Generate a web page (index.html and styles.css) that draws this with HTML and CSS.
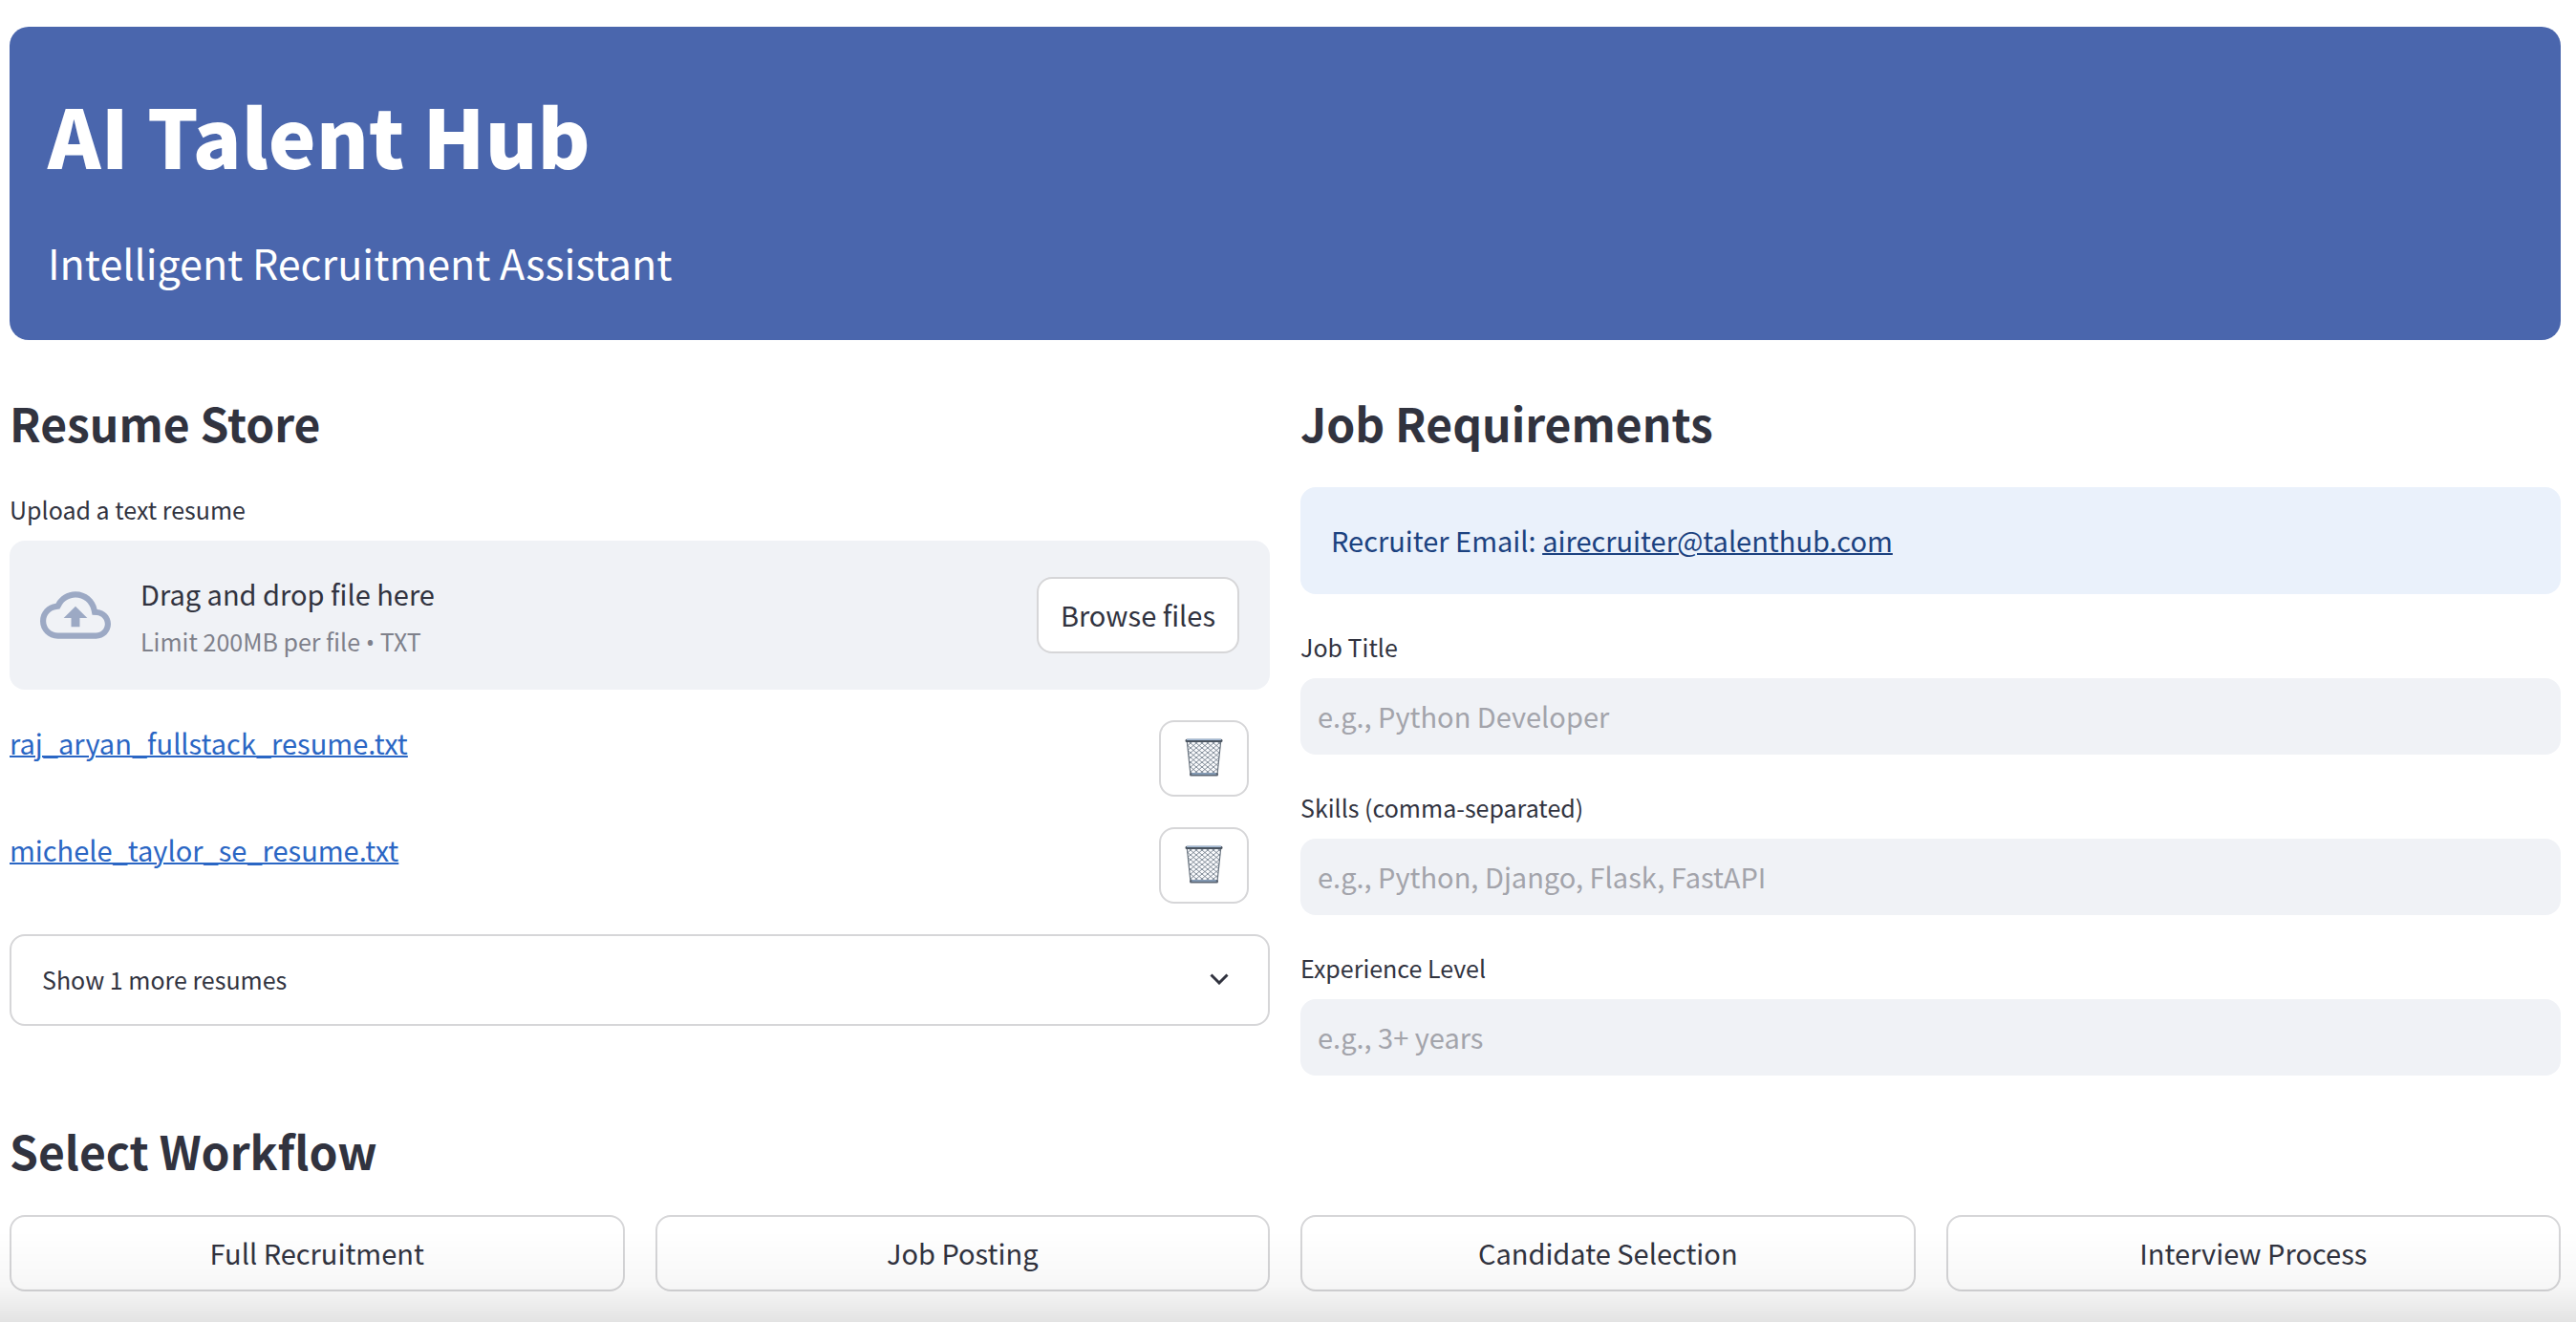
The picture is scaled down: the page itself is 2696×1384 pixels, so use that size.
FILE: index.html
```html
<!DOCTYPE html>
<html lang="en">
<head>
  <meta charset="utf-8">
  <meta name="viewport" content="width=device-width, initial-scale=1">
  <title>AI Talent Hub</title>
  <link rel="stylesheet" href="styles.css">
</head>
<body>
  <svg class="sprite" aria-hidden="true">
    <defs>
      <pattern id="mesh" width="6" height="5" patternUnits="userSpaceOnUse">
        <path d="M0 0L6 5M6 0L0 5" stroke="#75808d" stroke-width="0.900" fill="none"/>
      </pattern>
      <symbol id="bin" viewBox="0 0 40 40">
        <path d="M2 2.500H38L34 38H6Z" fill="#f9fafc"/>
        <path d="M2 2.500H38L34 38H6Z" fill="url(#mesh)"/>
        <path d="M2.300 3L6 38M37.700 3L34 38" stroke="#6b7580" stroke-width="1.200" fill="none"/>
        <rect x="0.500" y="0.800" width="39" height="3.200" rx="1.500" fill="#4a5460"/>
        <rect x="2" y="0.600" width="36" height="1.500" rx="0.700" fill="#a3b9d3"/>
        <rect x="5" y="36" width="30" height="3.400" rx="1.500" fill="#5b6572"/>
        <rect x="7" y="36.200" width="26" height="1.600" rx="0.800" fill="#90a9c8"/>
      </symbol>
    </defs>
  </svg>

  <main class="page">
    <header class="hero">
      <h1 class="hero-title">AI Talent Hub</h1>
      <p class="hero-subtitle">Intelligent Recruitment Assistant</p>
    </header>

    <div class="columns">
      <section class="column">
        <h2 class="heading">Resume Store</h2>
        <label class="label" for="browse">Upload a text resume</label>
        <div class="dropzone">
          <svg class="cloud" viewBox="0 0 24 24" aria-hidden="true"><path d="M19.350 10.040C18.670 6.590 15.640 4 12 4 9.110 4 6.600 5.640 5.350 8.040 2.340 8.360 0 10.910 0 14c0 3.310 2.690 6 6 6h13c2.760 0 5-2.240 5-5 0-2.640-2.050-4.780-4.650-4.960zM19 18H6c-2.210 0-4-1.790-4-4 0-2.050 1.530-3.760 3.560-3.970l1.070-.110.500-.950C8.080 7.140 9.940 6 12 6c2.620 0 4.880 1.860 5.390 4.430l.300 1.500 1.530.110c1.560.100 2.780 1.410 2.780 2.960 0 1.650-1.350 3-3 3zM8 13h2.550v3h2.900v-3H16l-4-4z"/></svg>
          <div class="drop-text">
            <span class="drop-main">Drag and drop file here</span>
            <small class="drop-limit">Limit 200MB per file <span class="dot">•</span> TXT</small>
          </div>
          <button class="button browse" id="browse" type="button">Browse files</button>
        </div>
        <div class="file-row">
          <a class="file-link" href="#raj">raj_aryan_fullstack_resume.txt</a>
          <button class="button delete" type="button" aria-label="Delete"><svg class="bin" aria-hidden="true"><use href="#bin"/></svg></button>
        </div>
        <div class="file-row">
          <a class="file-link" href="#michele">michele_taylor_se_resume.txt</a>
          <button class="button delete" type="button" aria-label="Delete"><svg class="bin" aria-hidden="true"><use href="#bin"/></svg></button>
        </div>
        <button class="button expander" type="button" aria-expanded="false">
          <span>Show 1 more resumes</span>
          <svg class="chevron" viewBox="0 0 20 12" aria-hidden="true"><path d="M1.500 1.500L10 10L18.500 1.500"/></svg>
        </button>
      </section>

      <section class="column">
        <h2 class="heading">Job Requirements</h2>
        <p class="notice">Recruiter Email: <a class="notice-link" href="mailto:airecruiter@talenthub.com">airecruiter@talenthub.com</a></p>
        <div class="field">
          <label class="label" for="job-title">Job Title</label>
          <input class="input" id="job-title" type="text" placeholder="e.g., Python Developer">
        </div>
        <div class="field">
          <label class="label" for="skills">Skills (comma-separated)</label>
          <input class="input" id="skills" type="text" placeholder="e.g., Python, Django, Flask, FastAPI">
        </div>
        <div class="field">
          <label class="label" for="experience">Experience Level</label>
          <input class="input" id="experience" type="text" placeholder="e.g., 3+ years">
        </div>
      </section>
    </div>

    <section class="workflow">
      <h2 class="heading">Select Workflow</h2>
      <div class="workflow-grid">
        <button class="button" type="button">Full Recruitment</button>
        <button class="button" type="button">Job Posting</button>
        <button class="button" type="button">Candidate Selection</button>
        <button class="button" type="button">Interview Process</button>
      </div>
    </section>
  </main>
  <div class="fade"></div>
</body>
</html>
```
FILE: styles.css
```css
* {
  box-sizing: border-box;
}

body {
  margin: 0;
  background: #ffffff;
  color: #31333f;
  font-family: "Noto Sans CJK SC", "Open Sans", sans-serif;
  font-size: 29px;
  line-height: 48px;
}

h1,
h2,
p {
  margin: 0;
}

.sprite {
  position: absolute;
  width: 0;
  height: 0;
}

.page {
  padding: 28px 16px 32px 10px;
}

.hero {
  height: 328px;
  padding: 61px 40px 0;
  border-radius: 20px;
  background: #4a66ad;
  color: #ffffff;
}

.hero-title {
  font-size: 84px;
  font-weight: 900;
  line-height: 104px;
}

.hero-subtitle {
  margin-top: 49px;
  font-size: 43px;
  line-height: 64px;
}

.columns {
  display: grid;
  grid-template-columns: 1fr 1fr;
  gap: 32px;
  margin-top: 32px;
}

.heading {
  padding: 20px 0 34px;
  font-size: 48px;
  font-weight: 700;
  line-height: 68px;
}

.label {
  display: block;
  margin-bottom: 10px;
  font-size: 25px;
  line-height: 46px;
}

.dropzone {
  display: flex;
  align-items: center;
  height: 156px;
  padding: 0 32px;
  border-radius: 16px;
  background: #f0f2f6;
}

.cloud {
  width: 74px;
  height: 74px;
  fill: #9ca9c4;
}

.drop-text {
  display: flex;
  flex: 1;
  flex-direction: column;
  gap: 2px;
  margin-left: 31px;
  padding-top: 4px;
}

.drop-limit {
  color: #7f818b;
  font-size: 25px;
}

.dot {
  font-family: "Open Sans", sans-serif;
}

.button {
  height: 80px;
  padding: 0 23px 3px;
  border: 2px solid #d6d6d8;
  border-radius: 16px;
  background: #ffffff;
  color: inherit;
  font: inherit;
}

.file-row {
  display: flex;
  align-items: flex-start;
  justify-content: space-between;
  margin-top: 32px;
  padding-right: 22px;
}

.file-link {
  color: #2a66c4;
  line-height: 46px;
  text-decoration-thickness: 2px;
}

.delete {
  display: flex;
  align-items: center;
  justify-content: center;
  width: 94px;
}

.bin {
  width: 40px;
  height: 40px;
}

.expander {
  display: flex;
  align-items: center;
  justify-content: space-between;
  width: 100%;
  height: 96px;
  margin-top: 32px;
  padding-right: 41px;
  padding-left: 32px;
  font-size: 25px;
}

.chevron {
  width: 20px;
  height: 12px;
  fill: none;
  stroke: #31333f;
  stroke-width: 3;
}

.notice {
  padding: 31px 32px 33px;
  border-radius: 16px;
  background: #eaf1fb;
  color: #1c4280;
}

.notice-link {
  color: inherit;
  text-decoration-thickness: 2px;
}

.field {
  margin-top: 32px;
}

.input {
  display: block;
  width: 100%;
  height: 80px;
  padding: 0 18px 2px;
  border: 0;
  border-radius: 16px;
  background: #f0f2f6;
  color: inherit;
  font: inherit;
}

.input::placeholder {
  color: #a3a4ab;
  opacity: 1;
}

.workflow {
  margin-top: 24px;
}

.workflow-grid {
  display: grid;
  grid-template-columns: repeat(4, 1fr);
  gap: 32px;
}

/* Soft shade along the lower edge of the window */
.fade {
  position: fixed;
  right: 0;
  bottom: 0;
  left: 0;
  height: 96px;
  background: linear-gradient(rgba(0, 0, 0, 0), rgba(0, 0, 0, 0.030) 60%, rgba(0, 0, 0, 0.110));
  pointer-events: none;
}
```
